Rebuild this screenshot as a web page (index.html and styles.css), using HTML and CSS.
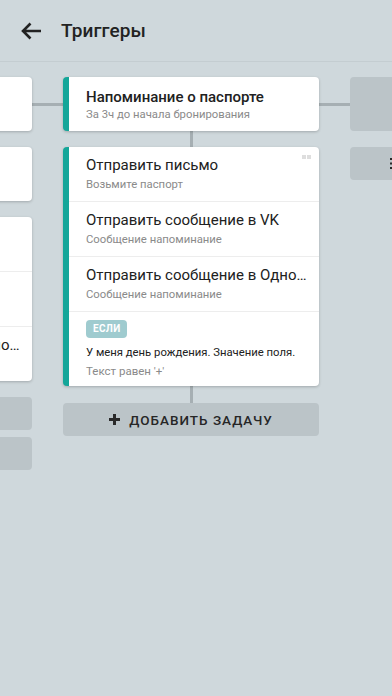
FILE: index.html
```html
<!DOCTYPE html>
<html lang="ru">
<head>
    <meta charset="UTF-8">
    <title>Триггеры</title>
    <link rel="stylesheet" href="styles.css">
</head>
<body>
    <header class="topbar">
        <a href="#" class="topbar__back">
            <svg width="22" height="18" viewBox="0 0 22 18"><path d="M21 9H3M10.5 1.5L3 9l7.5 7.5" fill="none" stroke="#222" stroke-width="2.6" stroke-linecap="butt"/></svg>
        </a>
        <h1 class="topbar__title">Триггеры</h1>
    </header>

    <main class="board">
        <!-- previous trigger (scrolled off to the left) -->
        <section class="column">
            <div class="card card--accent">
                <div class="row row--head">
                    <div class="row__title row__title--strong">Напоминание о брони</div>
                    <div class="row__sub">За 1д до начала бронирования</div>
                </div>
            </div>
            <div class="stem"></div>
            <div class="card card--accent">
                <div class="row">
                    <div class="row__title">Отправить письмо</div>
                    <div class="row__sub">Напоминание о брони</div>
                </div>
            </div>
            <div class="stem"></div>
            <div class="card card--accent">
                <div class="row">
                    <div class="row__title">Отправить письмо</div>
                    <div class="row__sub">Ждём вас</div>
                </div>
                <div class="row">
                    <div class="row__title">Отправить сообщение в VK</div>
                    <div class="row__sub">Сообщение напоминание</div>
                </div>
                <div class="row">
                    <div class="row__title">Отправить сообщение в Одно…</div>
                    <div class="row__sub">Сообщение напоминание</div>
                </div>
            </div>
            <div class="stem"></div>
            <a href="#" class="add">Добавить задачу</a>
            <a href="#" class="add add--next">Добавить условие</a>
        </section>

        <div class="link"></div>

        <section class="column">
            <div class="card card--accent">
                <div class="row row--head">
                    <div class="row__title row__title--strong">Напоминание о паспорте</div>
                    <div class="row__sub">За 3ч до начала бронирования</div>
                </div>
            </div>
            <div class="stem"></div>
            <div class="card card--accent">
                <span class="grip"><i></i><i></i></span>
                <div class="row">
                    <div class="row__title">Отправить письмо</div>
                    <div class="row__sub">Возьмите паспорт</div>
                </div>
                <div class="row">
                    <div class="row__title">Отправить сообщение в VK</div>
                    <div class="row__sub">Сообщение напоминание</div>
                </div>
                <div class="row">
                    <div class="row__title">Отправить сообщение в Одно…</div>
                    <div class="row__sub">Сообщение напоминание</div>
                </div>
                <div class="cond">
                    <span class="cond__badge">ЕСЛИ</span>
                    <div class="cond__text">У меня день рождения. Значение поля.</div>
                    <div class="cond__text cond__text--muted">Текст равен '+'</div>
                </div>
            </div>
            <div class="stem stem--tall"></div>
            <a href="#" class="add">
                <svg class="add__icon" width="11" height="11" viewBox="0 0 11 11"><path d="M0 4h11v3H0zM4 0h3v11H4z" fill="#2a2a2a"/></svg>
                Добавить задачу
            </a>
        </section>

        <div class="link"></div>

        <section class="column">
            <div class="ghost"></div>
            <div class="stem stem--blank"></div>
            <div class="ghost ghost--small">
                <svg width="8" height="11" viewBox="0 0 8 11"><path d="M0 0h8v2H0zM0 4.5h8v2H0zM0 9h8v2H0z" fill="#2a2a2a"/></svg>
            </div>
        </section>
    </main>
</body>
</html>
```

FILE: styles.css
```css
* { box-sizing: border-box; }

html, body {
    margin: 0;
    padding: 0;
}

body {
    background: #cfd8dc;
    font-family: Roboto, "Noto Sans", sans-serif;
    color: #212121;
    width: 392px;
    height: 696px;
    overflow: hidden;
}

a { color: inherit; text-decoration: none; }

.topbar {
    height: 62px;
    display: flex;
    align-items: center;
    padding-left: 20px;
    border-bottom: 1px solid #c4cdd1;
}

.topbar__back {
    display: flex;
    width: 22px;
    height: 18px;
}

.topbar__title {
    margin: 0 0 0 19px;
    font-size: 19px;
    font-weight: 500;
    color: #222;
    letter-spacing: 0.1px;
}

/* horizontal board, scrolled so the second trigger is in view */
.board {
    display: flex;
    align-items: flex-start;
    margin-left: -224px;
    padding-top: 15px;
}

.column {
    width: 256px;
    flex-shrink: 0;
    display: flex;
    flex-direction: column;
}

.link {
    width: 31px;
    flex-shrink: 0;
    height: 3px;
    margin-top: 26px;
    background: #a6afb3;
}

.stem {
    width: 3px;
    height: 16px;
    margin: 0 auto;
    background: #a6afb3;
}
.stem--tall { height: 17px; }
.stem--blank { background: none; }

.card {
    position: relative;
    background: #fff;
    border-radius: 4px;
    box-shadow: 0 1px 3px rgba(0, 0, 0, 0.22);
    overflow: hidden;
}

.card--accent { border-left: 6px solid #14a699; }

.grip {
    position: absolute;
    top: 8px;
    right: 8px;
    display: flex;
    gap: 1px;
}

.grip i {
    width: 4px;
    height: 4px;
    background: #dedede;
}

.row {
    padding: 8px 12px 8px 17px;
    border-top: 1px solid #ededed;
}
.row:first-of-type { border-top: 0; }

.row--head { padding-top: 10px; }
.row--head .row__sub { margin-top: 0; }

.row__title {
    font-size: 15px;
    line-height: 20px;
    white-space: nowrap;
    overflow: hidden;
    text-overflow: ellipsis;
}
.row__title--strong { font-weight: 500; }

.row__sub {
    margin-top: 2px;
    font-size: 11.3px;
    line-height: 16px;
    color: #8a8a8a;
    white-space: nowrap;
    overflow: hidden;
}

.cond {
    display: flex;
    flex-direction: column;
    align-items: flex-start;
    padding: 8px 8px 6px 17px;
    border-top: 1px solid #ededed;
}

.cond__badge {
    height: 18px;
    padding: 0 7px;
    border-radius: 4px;
    background: #9fcbcf;
    color: #fff;
    font-size: 10px;
    font-weight: 700;
    line-height: 18px;
    letter-spacing: 0.3px;
    margin-bottom: 6px;
}

.cond__text {
    font-size: 11.3px;
    line-height: 18px;
    white-space: nowrap;
}
.cond__text--muted {
    font-size: 11.5px;
    color: #8a8a8a;
}

.add {
    height: 33px;
    display: flex;
    align-items: center;
    justify-content: center;
    gap: 9px;
    border-radius: 4px;
    background: #bbc4c8;
    font-size: 13.5px;
    font-weight: 500;
    letter-spacing: 1px;
    text-transform: uppercase;
    color: #262626;
}
.add--next { margin-top: 7px; }

.add__icon { flex-shrink: 0; }

.ghost {
    height: 54px;
    border-radius: 4px;
    background: #bbc4c8;
}

.ghost--small {
    height: 33px;
    display: flex;
    align-items: center;
    padding-left: 40px;
}
```
